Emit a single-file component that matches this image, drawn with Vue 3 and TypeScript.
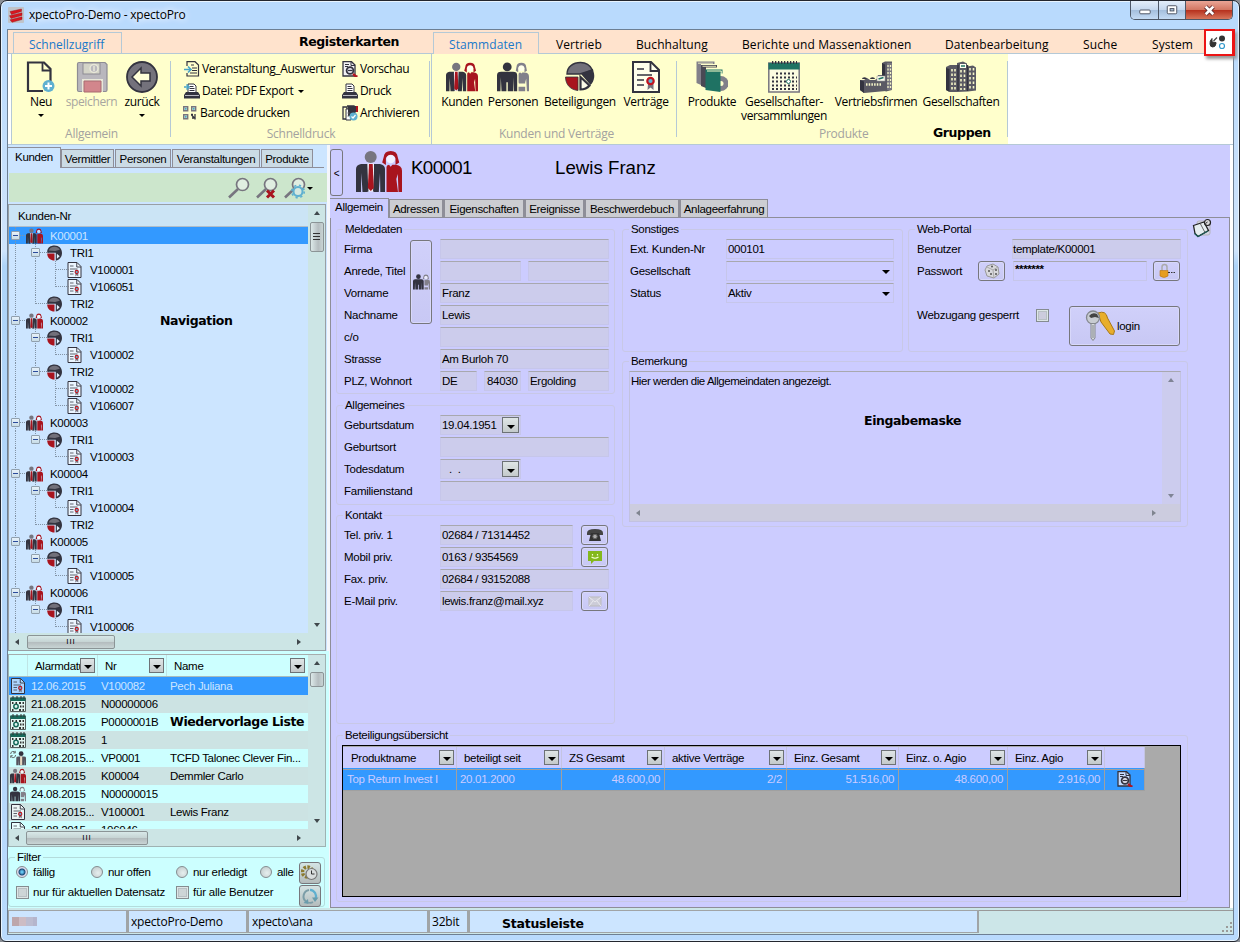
<script setup lang="ts">
interface TreeNode { label: string; kind: 'people' | 'pie' | 'contract'; children?: TreeNode[] }
interface TreeRow { label: string; kind: string; guides: boolean[]; last: boolean; open: boolean }

const contract = (label: string): TreeNode => ({ label, kind: 'contract' })
const fund = (label: string, ...ids: string[]): TreeNode => ({ label, kind: 'pie', children: ids.map(contract) })
const customer = (label: string, ...children: TreeNode[]): TreeNode => ({ label, kind: 'people', children })

const customers: TreeNode[] = [
  customer('K00001', fund('TRI1', 'V100001', 'V106051'), fund('TRI2')),
  customer('K00002', fund('TRI1', 'V100002'), fund('TRI2', 'V100002', 'V106007')),
  customer('K00003', fund('TRI1', 'V100003')),
  customer('K00004', fund('TRI1', 'V100004'), fund('TRI2')),
  customer('K00005', fund('TRI1', 'V100005')),
  customer('K00006', fund('TRI1', 'V100006')),
]

function flatten(nodes: TreeNode[], guides: boolean[], root: boolean): TreeRow[] {
  return nodes.flatMap((n, i) => {
    const last = !root && i === nodes.length - 1
    const kids = n.children ?? []
    return [
      { label: n.label, kind: n.kind, guides, last, open: kids.length > 0 },
      ...flatten(kids, [...guides, !last], false),
    ]
  })
}
const treeRows = flatten(customers, [], true)

const menuTabs = ['Vertrieb', 'Buchhaltung', 'Berichte und Massenaktionen', 'Datenbearbeitung', 'Suche', 'System']
const leftTabs = ['Vermittler', 'Personen', 'Veranstaltungen', 'Produkte']
const detailTabs = ['Adressen', 'Eigenschaften', 'Ereignisse', 'Beschwerdebuch', 'Anlageerfahrung']

const reminders = [
  { icon: 'contract', date: '12.06.2015', nr: 'V100082', name: 'Pech Juliana' },
  { icon: 'event', date: '21.08.2015', nr: 'N00000006', name: '' },
  { icon: 'event', date: '21.08.2015', nr: 'P0000001B', name: '' },
  { icon: 'event', date: '21.08.2015', nr: '1', name: '' },
  { icon: 'agent', date: '21.08.2015...', nr: 'VP0001', name: 'TCFD Talonec Clever Fin...' },
  { icon: 'people', date: '24.08.2015', nr: 'K00004', name: 'Demmler Carlo' },
  { icon: 'persons', date: '24.08.2015', nr: 'N00000015', name: '' },
  { icon: 'contract', date: '24.08.2015...', nr: 'V100001', name: 'Lewis Franz' },
  { icon: 'contract', date: '25.08.2015', nr: '106046', name: '' },
]

const holdings = [
  { head: 'Produktname', value: 'Top Return Invest I', num: false },
  { head: 'beteiligt seit', value: '20.01.2000', num: false },
  { head: 'ZS Gesamt', value: '48.600,00', num: true },
  { head: 'aktive Verträge', value: '2/2', num: true },
  { head: 'Einz. Gesamt', value: '51.516,00', num: true },
  { head: 'Einz. o. Agio', value: '48.600,00', num: true },
  { head: 'Einz. Agio', value: '2.916,00', num: true },
]
</script>

<template>
  <div class="window">
    <svg class="defs" aria-hidden="true">
      <symbol id="people" viewBox="0 0 46 41">
        <circle cx="14.7" cy="6" r="6" fill="#77757f" />
        <path d="M0 41V18q0-4 5-5h19q5 1 5 5v23h-4.700l-.3-19-1.200 19h-5.300V13h-5.600v28H6.500L5.300 22 5 41z" fill="#33333f" />
        <path d="M11.400 12.500h6.600v28h-6.600z" fill="#f2f2f8" />
        <path d="M11 14l1.500 26.500H9zM18.500 14l-1.500 26.500h3.500z" fill="#33333f" />
        <path d="M13 13h3.700l1.100 24-3 3-3-3z" fill="#a8141e" />
        <path d="M34.700 0q6.500 0 7 6l1.500 5.500-3.700 2.500V7.500q-1-3.500-4.800-3.500t-4.800 3.500V14l-3.700-2.500L27.700 6q.5-6 7-6z" fill="#a8141e" />
        <circle cx="34.700" cy="8" r="4.300" fill="#fff" opacity=".75" />
        <path d="M30.500 41V16q0-2 2.500-2.200l1.700 2 1.700-2H39q7 .5 7 6V41h-3.500l-.7-18-1.500 5 1.700 13z" fill="#a8141e" />
      </symbol>
      <symbol id="persons" viewBox="0 0 46 41">
        <circle cx="14.700" cy="6" r="6.300" fill="#33333f" />
        <path d="M0 41V18q0-5 6-5h17q6 0 6 5v23h-5V21l-1 20h-7.500V28h-2v13H6.500L5.500 21 5 41z" fill="#33333f" />
        <path d="M35 0q6.500 0 7 6l1 5.500-3.500 2V7.500Q38.500 4 35 4t-4.500 3.500v6l-3.500-2L28 6q.5-6 7-6z" fill="#82808a" />
        <circle cx="35" cy="8" r="4.300" fill="#fff" opacity=".6" />
        <path d="M31 28V16q1-2 2.500-2l1.500 1.500 1.500-1.500H39q7 0 7 6v21h-3l-1-18-1.500 5v2h-9zM31 34.500h9.500V41H31z" fill="#82808a" />
      </symbol>
      <symbol id="agent" viewBox="0 0 46 41">
        <path d="M2 9a7 7 0 0 1 13-4M16 12a7 7 0 0 1-13 4M15 0v6h-6M2 20v-6h6" fill="none" stroke="#555" stroke-width="2.500" />
        <circle cx="32" cy="8" r="7" fill="#33333f" />
        <path d="M18 41V20q0-4 6-4h16q6 0 6 4v21h-5V24l-1 17H24l-1-17v17z" fill="#55545e" />
        <path d="M29 16h6v25h-6z" fill="#e8d8c0" />
      </symbol>
      <symbol id="pie" viewBox="0 0 32 32">
        <path d="M3 13C3 6 9 1.500 16.500 1.500c6 0 10 3.500 12 7.500L16 13z" fill="#72707a" stroke="#33333f" stroke-width="1.400" />
        <path d="M28.500 8c3 6 2 12-2 16L17 13z" fill="#33333f" />
        <path d="M1.500 16H14v13.500C7 29 1.500 24 1.500 16z" fill="#a8141e" stroke="#33333f" stroke-width=".8" />
        <path d="M16.500 16l9 8.500c-2.500 3-5.500 4-9 4z" fill="#fbfbe8" stroke="#33333f" stroke-width="2.200" />
      </symbol>
      <symbol id="piesmall" viewBox="0 0 16 16">
        <path d="M.7 6.500C1 2.500 4 .5 8 .5c4.500 0 7.500 3 7.500 7.500S12 15.500 9.300 15.500V7.700H.7z" fill="#33333f" />
        <path d="M2.200 5.500C3 3 5 1.700 8 1.700c2.500 0 4.300 1 5.300 3L8.500 6z" fill="#72707a" />
        <path d="M.7 8.500H8v7C4 15.500.7 13 .7 8.500z" fill="#a8141e" />
        <path d="M10.400 8.700l2.800 2.600-2.800 2.400z" fill="#e6f1ff" />
      </symbol>
      <symbol id="contract" viewBox="0 0 28 32">
        <path d="M1 1h18l8 8v22H1z" fill="#fff" fill-opacity=".6" stroke="#33333f" stroke-width="2" />
        <path d="M18.500 1v9H27" fill="none" stroke="#33333f" stroke-width="1.800" />
        <path d="M5 8h7M5 14h15M5 19h7M5 24h7" stroke="#33333f" stroke-width="1.500" />
        <path d="M16 23l-.5 6 3-2.500 3 2.500V23z" fill="#77757f" />
        <circle cx="18.500" cy="20" r="3.200" fill="#5fb4d4" stroke="#c0141e" stroke-width="2.200" />
      </symbol>
      <symbol id="event" viewBox="0 0 16 16">
        <path d="M.5 2v13.500h15V2z" fill="#e2f6f2" stroke="#55605f" />
        <path d="M.5 1.500h15v3.500H.5z" fill="#17695a" />
        <path d="M3 0v3M7 0v3M11 0v3M14 0v3" stroke="#333" />
        <circle cx="6" cy="10.500" r="2.200" fill="none" stroke="#17695a" stroke-width="1.500" />
        <path d="M2 7h1.500M5.500 7h1.500M2 14h1.500M9 7h2M12.500 7h1.500M10 10.500h1.500M12.500 10.500h1.500M9 14h2M12.500 14h1.500" stroke="#333" stroke-width="1.800" />
      </symbol>
      <symbol id="preview" viewBox="0 0 16 16">
        <path d="M1 .7h8.500L13 4v11H1z" fill="#eef" fill-opacity=".8" stroke="#33333f" stroke-width="1.300" />
        <path d="M9 1v3.500h4M3 3.500h4M3 5.500h3" fill="none" stroke="#33333f" />
        <circle cx="8" cy="9.500" r="3.400" fill="#e4e4f0" stroke="#33333f" stroke-width="1.800" />
        <path d="M6 9.500h4.500" stroke="#33333f" stroke-width="1.200" />
        <path d="M11 13l3 2.500h1.500" stroke="#b0141e" stroke-width="2.300" />
      </symbol>
      <symbol id="printer" viewBox="0 0 16 16">
        <path d="M4 9V1h6l2 2v6" fill="#fff" stroke="#33333f" />
        <path d="M5.500 3.500h4M5.500 5.500h5M5.500 7.500h5" stroke="#33333f" />
        <path d="M2 9h12l2 3v3.500H0V12z" fill="#33333f" />
        <path d="M1 12.500h14" stroke="#b8b8c0" />
      </symbol>
      <symbol id="lens" viewBox="0 0 24 24">
        <circle cx="15.500" cy="8.500" r="6" fill="#e8f1ea" fill-opacity=".7" stroke="#77757f" stroke-width="1.700" />
        <path d="M11 13L2 21.500" stroke="#77757f" stroke-width="2.600" />
      </symbol>
    </svg>

    <header class="titlebar">
      <svg class="app-icon" viewBox="0 0 16 16"><rect width="16" height="16" rx="1" fill="#bfc3c9" /><path d="M2 4.500L13.500 2v2.500L3.500 7.500zM1.500 8.700L14 5.800v2.700L3 11.500zM2 12.800l12-3v2.700L4 15.300z" fill="#d8161f" stroke="#8c1216" stroke-width=".4" /></svg>
      <span class="title">xpectoPro-Demo - xpectoPro</span>
      <div class="controls">
        <i class="ctl min"><svg viewBox="0 0 28 19"><rect x="9" y="9.500" width="11" height="4" rx="1" fill="#fff" stroke="#4b5260" /></svg></i>
        <i class="ctl max"><svg viewBox="0 0 27 19"><rect x="8.500" y="5" width="10" height="8.500" rx="1" fill="#fff" stroke="#4b5260" /><rect x="11.500" y="8" width="4" height="2.500" fill="#a9bfd8" stroke="#4b5260" /></svg></i>
        <i class="ctl close"><svg viewBox="0 0 47 19"><path d="M20 6l8 8M28 6l-8 8" stroke="#5b2a2e" stroke-width="4.600" /><path d="M20 6l8 8M28 6l-8 8" stroke="#fff" stroke-width="2.800" /></svg></i>
      </div>
    </header>

    <div class="client">
      <nav class="menu ui">
        <span class="mtab quick">Schnellzugriff</span>
        <span class="note n-reg">Registerkarten</span>
        <span class="mtab active">Stammdaten</span>
        <span v-for="(t, i) in menuTabs" :key="t" class="mitem" :class="'m' + i">{{ t }}</span>
        <span class="toggle"><svg viewBox="0 0 26 22"><path d="M11 6.500L7.500 10" stroke="#444" stroke-width="1.300" /><path d="M6 7.500v3.500l4 .5v1q-.5 3.500-3.200 3.500T4 13q-.5-3 2-5.500z" fill="#333" stroke="#333" /><circle cx="16" cy="7.500" r="3" fill="#333" /><circle cx="16" cy="15" r="2.500" fill="#fff" stroke="#3098cc" stroke-width="1.200" /></svg></span>
      </nav>

      <div class="ribbon ui">
        <section class="group g-allg">
          <div class="bigs">
            <div class="big"><svg class="ic32" viewBox="0 0 32 32"><path d="M6 1.500h13l6.500 6.500V20M18 30H3V1.500h4" fill="none" stroke="#33333f" stroke-width="2.200" /><path d="M17.500 1.500V9.500H25.500" fill="none" stroke="#33333f" stroke-width="1.800" /><circle cx="23.500" cy="25" r="6" fill="#5fb0d0" /><path d="M23.500 21.500v7M20 25h7" stroke="#fff" stroke-width="2" /></svg><span>Neu</span><i class="caret" /></div>
            <div class="big off"><svg class="ic32" viewBox="0 0 32 32"><path d="M1.500 3q0-1.500 1.500-1.500h26l2 2V29q0 1.500-1.500 1.500H3Q1.500 30.500 1.500 29z" fill="#b9b7bd" stroke="#8e8c94" stroke-width="1.200" /><rect x="7" y="2" width="17" height="11" fill="#d4d4c8" stroke="#8e8c94" /><circle cx="18" cy="7.500" r="4" fill="#b9b7bd" stroke="#e8e8d8" stroke-width="1.500" /><path d="M18 5v5" stroke="#e8e8d8" stroke-width="1.500" /><path d="M6 18h21v13H6z" fill="#e8e8d8" /><path d="M8 20h17v11H8z" fill="#d2868c" stroke="#a86a70" /></svg><span>speichern</span></div>
            <div class="big"><svg class="ic32" viewBox="0 0 32 32"><circle cx="16" cy="16" r="15" fill="#74727c" stroke="#33333f" stroke-width="1.800" /><path d="M6 16l9-9v5h9v8h-9v5z" fill="#ffffd8" stroke="#33333f" stroke-width="1.500" /></svg><span>zurück</span><i class="caret" /></div>
          </div>
          <div class="gname">Allgemein</div>
        </section>
        <section class="group g-druck">
          <div class="smalls">
            <span class="small"><svg class="ic16" viewBox="0 0 16 16"><path d="M3 5V.7h8L14.500 4v11H3v-3" fill="none" stroke="#33333f" stroke-width="1.200" /><path d="M7 4h3M8 7h5M8 9.500h5M6 12h7" stroke="#33333f" /><path d="M0 8.500h6M4 5.500l3 3-3 3" fill="none" stroke="#4aa4c8" stroke-width="1.700" /></svg>Veranstaltung_Auswertur</span>
            <span class="small"><svg class="ic16"><use href="#preview" /></svg>Vorschau</span>
            <span class="small"><svg class="ic16" viewBox="0 0 16 16"><use href="#printer" /><path d="M0 4h4M2.500 1.500L5 4 2.500 6.500" fill="none" stroke="#4aa4c8" stroke-width="1.600" /></svg>Datei: PDF Export<i class="caret inline" /></span>
            <span class="small"><svg class="ic16"><use href="#printer" /></svg>Druck</span>
            <span class="small bar"><svg class="ic16" viewBox="0 0 16 16"><g fill="none" stroke="#77757f" stroke-width="1.400"><path d="M1.700 1.700h4v4h-4zM9.700 1.700h4v4h-4zM1.700 9.700h4v4h-4z" /></g><path d="M2.700 3.700h2M10.700 3.700h2M2.700 11.700h2" stroke="#4aa4c8" stroke-width="2" /><path d="M9.500 10l4 4M13 9v5.500M10 13h2M9 9.500h2" stroke="#33333f" stroke-width="1.300" /></svg>Barcode drucken</span>
            <span class="small"><svg class="ic16" viewBox="0 0 16 16"><path d="M1 2h4v12H1zM5 1h7v9" fill="none" stroke="#33333f" stroke-width="1.300" /><path d="M4 4h5v11H4z" fill="#fff" stroke="#33333f" /><path d="M6 1h8l1 5-5 5H6z" fill="#33333f" /><path d="M15 1v6" stroke="#b0141e" stroke-width="2" /><path d="M5.500 8h2M5.500 11h2" stroke="#666" /><circle cx="11.500" cy="11.500" r="4" fill="#5fb0d0" /><path d="M9.500 11.500l1.500 1.500 2.500-3" fill="none" stroke="#fff" stroke-width="1.200" /></svg>Archivieren</span>
          </div>
          <div class="gname">Schnelldruck</div>
        </section>
        <section class="group g-kunden">
          <div class="bigs">
            <div class="big"><svg class="ic32"><use href="#people" /></svg><span>Kunden</span></div>
            <div class="big"><svg class="ic32"><use href="#persons" /></svg><span>Personen</span></div>
            <div class="big"><svg class="ic32"><use href="#pie" /></svg><span>Beteiligungen</span></div>
            <div class="big"><svg class="ic32"><use href="#contract" /></svg><span>Verträge</span></div>
          </div>
          <div class="gname">Kunden und Verträge</div>
        </section>
        <section class="group g-prod">
          <div class="bigs">
            <div class="big"><svg class="ic32" viewBox="0 0 32 32"><path d="M.5.500h18v2.500H5v21l-4.500-2z" fill="#82808a" /><path d="M2 2.200h15" stroke="#ffc" stroke-width=".8" /><path d="M5 4h16v2.500H10V27l-5-2z" fill="#4a4954" /><path d="M6.500 5.300H20" stroke="#ffc" stroke-width=".8" /><circle cx="25" cy="22.500" r="7.500" fill="#82808a" /><circle cx="25" cy="22.500" r="2.500" fill="#ffc" /><path d="M9.500 8.500h17v4h-2V31l-15-2z" fill="#1f7263" /><path d="M11 10h14.500M25.200 10v3" stroke="#ffc" stroke-width="1" /></svg><span>Produkte</span></div>
            <div class="big"><svg class="ic32" viewBox="0 0 32 32"><rect x=".8" y="2" width="30.400" height="29" fill="#fbfbe0" stroke="#77757f" stroke-width="1.500" /><path d="M.5 2h31v6.500H.5z" fill="#1f7263" /><path d="M4 1.500h25" stroke="#33333f" stroke-width="3" stroke-dasharray="1.300 1.700" /><g stroke="#33333f" stroke-width="1.800" stroke-dasharray="2 2"><path d="M8 12.500h20M4 16.500h25M4 20.500h25M4 24.500h25M4 28h25" /></g><circle cx="20.500" cy="20.500" r="2" fill="#fff" stroke="#1f7263" /></svg><span>Gesellschafter-<br>versammlungen</span></div>
            <div class="big"><svg class="ic32" viewBox="0 0 32 32"><path d="M22 2l3-1.500h7V29l-6 1.500-4-2z" fill="#5b5a64" /><path d="M27 2h5v27h-5z" fill="#77757f" /><path d="M0 19h4l3-2 3 2h5l3-2v-3h8v16l-22 2-4-3z" fill="#5b5a64" /><path d="M0 19l4 1.500V32l-4-3zM22 2l3 1.500V16h-3z" fill="#33333f" /><path d="M2 18a2 1.500 0 0 1 5 0M10 18a2 1.500 0 0 1 5 0" fill="#33333f" /><path d="M28 4v23M30.500 4v23" stroke="#f5f5c8" stroke-width="1.300" stroke-dasharray="2 1.500" /><path d="M6 23.500h16" stroke="#f5f5c8" stroke-width="2.500" stroke-dasharray="1.500 1.200" /><path d="M17 15h8v5h-8z" fill="#fffff0" stroke="#999" stroke-width=".6" /><path d="M18.500 18l5-1.500" stroke="#1f7263" stroke-width="1.700" /></svg><span>Vertriebsfirmen</span></div>
            <div class="big"><svg class="ic32" viewBox="0 0 32 32"><path d="M1 6l4-2h7V2l6-1.500 4 2v3l6-1 3 2v23l-8 1-11 .5H5l-4-2z" fill="#5b5a64" /><path d="M1 7l3.500 1v23L1 29z" fill="#33333f" /><g stroke="#f5f5c8" stroke-width="1.600" stroke-dasharray="2.500 2"><path d="M7 8v21M10 8v21M16 9v20M19.500 9v20M25 7v22M28.500 7v22" /></g><path d="M13 4v26M22.500 4v26" stroke="#33333f" stroke-width="1.500" /><path d="M15 3h6v4h-6z" fill="#fffff0" /><path d="M16 5h4" stroke="#1f7263" stroke-width="1.500" /></svg><span>Gesellschaften</span></div>
          </div>
          <div class="gname">Produkte<span class="note n-grp">Gruppen</span></div>
        </section>
      </div>

      <div class="main">
        <aside class="left">
          <div class="tabs ltabs">
            <span class="tab on">Kunden</span>
            <span v-for="t in leftTabs" :key="t" class="tab">{{ t }}</span>
          </div>
          <div class="toolbar">
            <svg><use href="#lens" /></svg>
            <svg viewBox="0 0 24 24"><use href="#lens" /><path d="M12 14.500l7 7M19 14.500l-7 7" stroke="#a8141e" stroke-width="3" /></svg>
            <svg viewBox="0 0 24 24"><use href="#lens" /><circle cx="15" cy="15.500" r="4.500" fill="#d5e8e0" stroke="#5fb0d0" stroke-width="2" /><circle cx="15" cy="15.500" r="6.200" fill="none" stroke="#5fb0d0" stroke-width="1.700" stroke-dasharray="2.200 2.700" /></svg>
            <i class="caret" />
          </div>
          <div class="tree">
            <div class="tree-view">
              <div class="tree-head">Kunden-Nr</div>
              <div class="tree-rows">
                <div v-for="(r, i) in treeRows" :key="i" class="trow" :class="{ sel: i === 0 }">
                  <i v-for="(g, k) in r.guides" :key="k" class="cell" :class="{ line: g }" />
                  <i class="cell own" :class="[r.last ? 'end' : 'line']"><b v-if="r.open" class="exp" /></i>
                  <svg class="tic" :class="r.kind"><use :href="r.kind === 'pie' ? '#piesmall' : '#' + r.kind" /></svg>
                  <span>{{ r.label }}</span>
                </div>
              </div>
              <div class="hbar"><i class="arr l" /><i class="thumb t1">III</i><i class="arr r" /></div>
            </div>
            <div class="vbar"><i class="arr u" /><i class="vthumb grip" /><i class="arr d" /></div>
            <span class="note n-nav">Navigation</span>
          </div>
          <div class="lower">
            <div class="list">
              <div class="list-view">
                <div class="lrow lhead"><i /><span>Alarmdatum<b class="dd" /></span><span>Nr<b class="dd" /></span><span>Name<b class="dd" /></span></div>
                <div class="lrows">
                  <div v-for="(r, i) in reminders" :key="i" class="lrow" :class="{ sel: i === 0, alt: i % 2 === 1 }">
                    <svg class="lic"><use :href="'#' + r.icon" /></svg><span>{{ r.date }}</span><span>{{ r.nr }}</span><span>{{ r.name }}</span>
                  </div>
                </div>
                <div class="hbar"><i class="arr l" /><i class="thumb t2">III</i><i class="arr r" /></div>
              </div>
              <div class="vbar"><i class="arr u" /><i class="vthumb tiny" /><i class="arr d" /></div>
              <span class="note n-wv">Wiedervorlage Liste</span>
            </div>
            <fieldset class="box filter">
              <legend>Filter</legend>
              <div class="opts">
                <label><i class="radio on" />fällig</label><label><i class="radio" />nur offen</label><label><i class="radio" />nur erledigt</label><label><i class="radio" />alle</label>
              </div>
              <div class="opts chk">
                <label><i class="check" />nur für aktuellen Datensatz</label><label><i class="check" />für alle Benutzer</label>
              </div>
              <div class="fbtns">
                <span class="btn"><svg viewBox="0 0 18 18"><circle cx="6.500" cy="8" r="5" fill="none" stroke="#8c7a30" stroke-width="3.500" stroke-dasharray="2.500 1.300" /><circle cx="10.500" cy="10" r="5.500" fill="#d8dcdc" stroke="#777" stroke-width="1.200" /><path d="M10.500 6.500V10h3" fill="none" stroke="#333" /></svg></span>
                <span class="btn"><svg viewBox="0 0 18 18"><path d="M5 14.500A6.500 6.500 0 0 1 8 3" fill="none" stroke="#7c9ea8" stroke-width="2" /><path d="M9 2.800a6.500 6.500 0 0 1 5.500 9" fill="none" stroke="#5fb0d0" stroke-width="2.200" /><path d="M11 10.500h6.500l-3.500 4.500zM7 12l.5 5-5-1z" fill="#6a9cac" /><path d="M7 15.500q3 1 5-.5" fill="none" stroke="#7c9ea8" stroke-width="1.600" /></svg></span>
              </div>
            </fieldset>
          </div>
        </aside>

        <main class="right">
          <div class="rhead">
            <span class="collapse">&lt;</span>
            <svg class="ppl"><use href="#people" /></svg>
            <span class="h1 id">K00001</span><span class="h1">Lewis Franz</span>
          </div>
          <div class="tabs rtabs">
            <span class="tab on">Allgemein</span>
            <span v-for="t in detailTabs" :key="t" class="tab">{{ t }}</span>
            <i class="rest" />
          </div>
          <div class="page">
            <div class="forms">
              <div class="col1">
                <fieldset class="box meld">
                  <legend>Meldedaten</legend>
                  <div class="row"><label>Firma</label><i class="in w168" /></div>
                  <div class="row"><label>Anrede, Titel</label><i class="in w80" /><i class="in w80" /></div>
                  <div class="row"><label>Vorname</label><i class="in w168">Franz</i></div>
                  <div class="row"><label>Nachname</label><i class="in w168">Lewis</i></div>
                  <div class="row"><label>c/o</label><i class="in w168" /></div>
                  <div class="row"><label>Strasse</label><i class="in w168">Am Burloh 70</i></div>
                  <div class="row"><label>PLZ, Wohnort</label><i class="in w36">DE</i><i class="in w36">84030</i><i class="in w80">Ergolding</i></div>
                  <span class="btn pbtn"><svg><use href="#persons" /></svg></span>
                </fieldset>
                <fieldset class="box allg">
                  <legend>Allgemeines</legend>
                  <div class="row"><label>Geburtsdatum</label><i class="in w80">19.04.1951<b class="dd" /></i></div>
                  <div class="row"><label>Geburtsort</label><i class="in w168" /></div>
                  <div class="row"><label>Todesdatum</label><i class="in w80 dots">.&nbsp;&nbsp;.<b class="dd" /></i></div>
                  <div class="row"><label>Familienstand</label><i class="in w168" /></div>
                </fieldset>
                <fieldset class="box kont">
                  <legend>Kontakt</legend>
                  <div class="row"><label>Tel. priv. 1</label><i class="in w133">02684 / 71314452</i><span class="btn"><svg viewBox="0 0 18 14"><path d="M1 5q0-4 8-4t8 4v2h-4V5H5v2H1z" fill="#444" /><path d="M5 5h8l2 8H3z" fill="#333" /><circle cx="9" cy="8.500" r="2.200" fill="#aaa" stroke="#666" /></svg></span></div>
                  <div class="row"><label>Mobil priv.</label><i class="in w133">0163 / 9354569</i><span class="btn"><svg viewBox="0 0 18 14"><path d="M2 1h14v10H8l-3 3v-3H2z" fill="#84b81c" /><path d="M6.500 4v1.500M11.500 4v1.500M5.500 7q3.500 2.500 7 0" fill="none" stroke="#f4ffd8" stroke-width="1.200" /></svg></span></div>
                  <div class="row"><label>Fax. priv.</label><i class="in w168">02684 / 93152088</i></div>
                  <div class="row"><label>E-Mail priv.</label><i class="in w133">lewis.franz@mail.xyz</i><span class="btn"><svg viewBox="0 0 18 14"><path d="M3 3h12v9H3z" fill="#ccccd8" stroke="#bbb" /><path d="M3 3l6 5 6-5M3 12l4-5M15 12l-4-5" fill="none" stroke="#e8e8ee" /></svg></span></div>
                </fieldset>
              </div>
              <div class="col2">
                <div class="two">
                  <fieldset class="box sonst">
                    <legend>Sonstiges</legend>
                    <div class="row"><label>Ext. Kunden-Nr</label><i class="in clear">000101</i></div>
                    <div class="row"><label>Gesellschaft</label><i class="in clear"><b class="drop" /></i></div>
                    <div class="row"><label>Status</label><i class="in clear">Aktiv<b class="drop" /></i></div>
                  </fieldset>
                  <fieldset class="box web">
                    <legend>Web-Portal</legend>
                    <div class="row"><label>Benutzer</label><i class="in user">template/K00001</i></div>
                    <div class="row pw"><label>Passwort</label><span class="btn"><svg viewBox="0 0 18 16"><path d="M4 3l6-2 5 3 1 7-5 4-7-2-2-6z" fill="#d8d8dc" stroke="#999" /><path d="M4 4l6 3 5-3M10 7l1 8" fill="none" stroke="#aaa" /><circle cx="6" cy="8" r="1" fill="#555" /><circle cx="8" cy="11" r="1" fill="#555" /><circle cx="13" cy="7" r="1" fill="#555" /><circle cx="13" cy="11" r="1" fill="#555" /><circle cx="9" cy="3.500" r="1" fill="#555" /></svg></span><i class="in clear pass">*******</i><span class="btn"><svg viewBox="0 0 18 16"><path d="M4 8V4a2.500 2.500 0 0 1 5 0v3" fill="none" stroke="#aaa" stroke-width="1.500" /><path d="M2 7.500h8v5.500q-4 3-8 0z" fill="#e59d20" stroke="#b87410" stroke-width=".6" /><path d="M10 9.500h2M13 9.500h1.500M15.500 9.500H17" stroke="#333" stroke-width="1.200" /></svg></span></div>
                    <div class="row lock"><label>Webzugang gesperrt</label><i class="check" /><span class="btn login"><svg viewBox="0 0 30 32"><path d="M13 3q8-3 9.500 5l7 13-1 3.500-3.500-.5L16 12z" fill="#e8ae2c" stroke="#a87818" /><circle cx="8" cy="7.500" r="6.500" fill="#c8ccd2" stroke="#84888e" stroke-width="1.300" /><path d="M4 6q3-4 8-2l2 4-4-1-4 1z" fill="#444" /><path d="M6 13.500h4V28l-2 2.500-2-2.500z" fill="#d4d8dc" stroke="#84888e" /><path d="M8 15v13" stroke="#84888e" /></svg>login</span></div>
                  </fieldset>
                </div>
                <fieldset class="box bem">
                  <legend>Bemerkung</legend>
                  <div class="memo">
                    <p>Hier werden die Allgemeindaten angezeigt.</p>
                    <div class="vbar plain"><i class="arr u" /><i class="arr d" /></div>
                    <div class="hbar plain"><i class="arr l" /><i class="arr r" /></div>
                  </div>
                  <span class="note n-mask">Eingabemaske</span>
                </fieldset>
              </div>
              <svg class="pin" viewBox="0 0 20 20"><rect x="5" y="3" width="13" height="14" rx="2" fill="#d4d4e0" stroke="#b4b4bc" /><path d="M1.500 7.500L12 4l4.500 8.500L6 18.500l-3-3z" fill="#e6eef0" stroke="#222" stroke-width="1.300" /><path d="M8.500 6l4.500 8.500" stroke="#666" /><path d="M2.500 15.500l3.500 3 10-5.500" fill="none" stroke="#1d5c58" stroke-width="1.200" /><circle cx="15.500" cy="4.500" r="3" fill="#ddd" stroke="#222" stroke-width="1.200" /><path d="M13.500 5.500l2-1.500" stroke="#222" /></svg>
            </div>
            <fieldset class="box bet">
              <legend>Beteiligungsübersicht</legend>
              <div class="grid">
                <div class="grow ghead"><span v-for="h in holdings" :key="h.head">{{ h.head }}<b class="dd" /></span><span /></div>
                <div class="grow gsel"><span v-for="h in holdings" :key="h.head" :class="{ num: h.num }">{{ h.value }}</span><span class="pv"><svg><use href="#preview" /></svg></span></div>
              </div>
            </fieldset>
          </div>
        </main>
      </div>

      <footer class="status">
        <span><i class="mosaic"><b /><b /><b /><b /></i></span><span>xpectoPro-Demo</span><span>xpecto\ana</span><span>32bit</span><span><em class="note n-stat">Statusleiste</em></span>
        <span class="grip-cell"><svg viewBox="0 0 12 12"><path d="M9 1h2v2H9zM5 5h2v2H5zM9 5h2v2H9zM1 9h2v2H1zM5 9h2v2H5zM9 9h2v2H9z" fill="#9a9a98" /></svg></span>
      </footer>
    </div>
  </div>
</template>

<style>
html, body { margin: 0; background: #8b8f96; overflow: hidden; }
</style>

<style scoped>
* { box-sizing: border-box; }
i, em { font-style: normal; }
.defs { position: absolute; width: 0; height: 0; }
.window { width: 1240px; height: 942px; border: 1px solid #23262e; border-radius: 7px 7px 6px 6px; background: linear-gradient(#b9dafd 0, #b9dafd 30px, #cfe4fb 250px, #aed4f8 265px, #b9dafd 100%); padding: 0 6px 6px 6px; display: flex; flex-direction: column; font: 11.500px/14px "Liberation Sans", sans-serif; letter-spacing: -.3px; color: #000; box-shadow: inset 0 0 0 1px #e8f4ff; white-space: nowrap; }
.ui { font-family: "Open Sans", "Noto Sans", sans-serif; font-size: 12px; letter-spacing: -.36px; }
.note { font: bold 12.500px/16px "DejaVu Sans", sans-serif; letter-spacing: -.4px; color: #000; }
.n-nav, .n-wv, .n-mask { position: absolute; }

.titlebar { height: 28px; flex: none; display: flex; align-items: center; padding-left: 1px; font: 12px/16px "Open Sans", sans-serif; letter-spacing: -.2px; }
.app-icon { width: 16px; height: 16px; margin-right: 5px; }
.title { text-shadow: 0 0 6px #fff, 0 0 8px #fff; }
.controls { display: flex; margin-left: auto; align-self: flex-start; margin-right: 0; border: 1px solid #4d5766; border-top: 0; border-radius: 0 0 5px 5px; overflow: hidden; height: 19px; }
.ctl { display: block; height: 18px; background: linear-gradient(#e4eefa, #c5d8ee 48%, #a4bedc 50%, #c4dbf4); border-right: 1px solid #4d5766; }
.ctl svg { display: block; width: 100%; height: 18px; }
.min { width: 28px; } .max { width: 27px; }
.close { width: 46px; border: 0; background: linear-gradient(#eaa596, #d37763 48%, #b52f1c 50%, #d8755a); }

.client { height: 906px; display: flex; flex-direction: column; border: 1px solid #6d7f93; background: #fff; width: 1227px; flex: none; }
.menu { height: 24px; background: #ffe3cd; display: flex; flex: none; border-bottom: 1px solid #b5c9d6; position: relative; line-height: 24px; letter-spacing: .1px; }
.mtab { border: 1px solid #b5c9d6; border-bottom: 0; margin-top: 2px; height: 22px; color: #1979ca; padding-left: 15px; line-height: 23px; }
.quick { margin-left: 5px; width: 109px; letter-spacing: 0; }
.n-reg { margin-left: 177px; width: 134px; line-height: 23px; }
.active { width: 106px; background: #ffe3cd; height: 23px; }
.mitem { line-height: 29px; height: 23px; }
.m0 { margin-left: 17px; width: 80px; } .m1 { width: 106px; } .m2 { width: 203px; } .m3 { width: 138px; } .m4 { width: 69px; } .m5 { width: 52px; }
.toggle { position: absolute; left: 1196px; top: -1px; width: 31px; height: 27px; border: 3px solid #ec1414; border-width: 2px 3px 2px 2px; background: #fff; box-shadow: 2px 3px 3px #999; z-index: 2; }
.toggle svg { display: block; width: 26px; height: 22px; }

.ribbon { height: 91px; flex: none; display: flex; border-bottom: 1px solid #b5c9d6; padding-left: 3px; position: relative; }
.group { background: #ffffcc; padding-top: 7px; display: flex; flex-direction: column; position: relative; height: 90px; }
.group::after { content: ""; position: absolute; right: 0; top: 7px; height: 76px; width: 1px; background: #b5c9d6; }
.g-allg { width: 160px; border-left: 1px solid #b5c9d6; }
.g-druck { width: 261px; border-right: 1px solid #b5c9d6; }
.g-druck::after { right: 1px; }
.g-kunden { width: 245px; } .g-prod { width: 331px; }
.bigs { display: grid; justify-content: start; height: 72px; flex: none; }
.g-allg .bigs { grid-template-columns: 50px 51px 50px; padding-left: 4px; }
.g-kunden .bigs { grid-template-columns: 50px 52px 82px 50px; padding-left: 5px; }
.g-prod .bigs { grid-template-columns: 48px 96px 88px 82px; padding-left: 11px; }
.big { display: flex; flex-direction: column; align-items: center; text-align: center; line-height: 14px; }
.big > span { margin: 2px -12px 0; }
.off { color: #a8a6a0; }
.ic32 { width: 32px; height: 32px; flex: none; }
.caret { display: block; width: 0; height: 0; border: 3px solid transparent; border-top-color: #000; border-bottom: 0; }
.big .caret { margin-top: 5px; }
.caret.inline { margin-left: 4px; }
.gname { text-align: center; color: #a3a2a0; line-height: 11px; height: 11px; margin-top: -5px; position: relative; letter-spacing: -.25px; }
.g-prod .gname { text-align: left; padding-left: 142px; } .g-kunden .gname { text-align: left; padding-left: 67px; }
.n-grp { position: absolute; left: 256px; top: -3px; }
.smalls { display: grid; grid-template-columns: 158px 90px; grid-auto-rows: 22px; height: 72px; padding-left: 13px; }
.small { display: flex; align-items: center; height: 16px; }
.ic16 { width: 16px; height: 16px; margin-right: 2px; flex: none; overflow: visible; }
.bar .ic16 { margin: 0 2px 0 -2px; }

.main { flex: none; height: 763px; display: flex; }
.left { width: 322px; background: #cce5ff; display: flex; flex-direction: column; border-right: 3px solid #f4f6fb; padding-top: 2px; }
.tabs { display: flex; align-items: flex-end; }
.tab { background: #cccdd2; border: 1px solid #8e8e98; border-bottom: 0; text-align: center; line-height: 17px; height: 18px; margin-right: 1px; }
.ltabs { height: 21px; width: 316px; border-bottom: 1px solid #8e8e98; }
.ltabs .tab { background: #cbdbe5; line-height: 19px; }
.ltabs .tab:nth-child(2) { width: 53px; } .ltabs .tab:nth-child(3) { width: 56px; } .ltabs .tab:nth-child(4) { width: 88px; } .ltabs .tab:nth-child(5) { width: 52px; }
.ltabs .tab.on { width: 53px; background: #cce5ff; height: 21px; border-left: 0; margin: 0 0 -1px; line-height: 18px; }
.toolbar { margin: 5px 0 2px 1px; height: 29px; background: #cce6cc; display: flex; align-items: center; padding-left: 218px; gap: 4px; flex: none; }
.toolbar svg { width: 24px; height: 24px; }
.toolbar .caret { margin-left: -4px; margin-top: 1px; }
.tree { position: relative; height: 447px; width: 318px; border: 1px solid #999fa4; display: flex; flex: none; }
.tree-view { width: 299px; display: flex; flex-direction: column; }
.tree-head { height: 22px; padding-left: 9px; line-height: 22px; flex: none; background: #cbe4f5; border-bottom: 1px solid #b0bdc8; }
.tree-rows { height: 406px; overflow: hidden; flex: none; }
.trow { height: 17px; display: flex; align-items: center; line-height: 18px; }
.sel { background: #39f; color: #cce5ff; }
.cell { position: relative; width: 20px; height: 17px; flex: none; }
.cell.line::before, .cell.end::before { content: ""; position: absolute; left: 6px; top: 0; height: 17px; border-left: 1px dotted #8394a6; }
.cell.end::before { height: 9px; }
.cell.own::after { content: ""; position: absolute; left: 7px; top: 8px; width: 13px; border-top: 1px dotted #8394a6; }
.exp { position: absolute; left: 2px; top: 4px; width: 9px; height: 9px; border: 1px solid #91a0ad; border-radius: 1px; background: linear-gradient(#e6f1fa, #c8dce6); z-index: 1; }
.exp::after { content: ""; position: absolute; left: 1px; top: 3px; width: 5px; height: 1px; background: #2a4b9b; }
.tic { width: 17px; height: 16px; margin-left: -3px; margin-right: 7px; flex: none; z-index: 1; }
.tic.contract { width: 15px; margin: 0 8px 0 -2px; }
.hbar { height: 17px; background: #cce5e5; display: flex; align-items: center; width: 299px; position: relative; flex: none; }
.arr { width: 0; height: 0; border: 3px solid transparent; flex: none; }
.arr.l { border-right: 4px solid #40484c; border-left: 0; margin-left: 6px; }
.arr.r { border-left: 4px solid #40484c; border-right: 0; margin-left: auto; margin-right: 7px; }
.arr.u { border-bottom: 4px solid #40484c; border-top: 0; margin-top: 6px; }
.arr.d { border-top: 4px solid #40484c; border-bottom: 0; margin-top: auto; margin-bottom: 23px; }
.thumb { height: 14px; border: 1px solid #8b9496; border-radius: 2px; background: linear-gradient(#d8e8e8, #c6d4d4 48%, #b4bcbe 52%, #c8d4d4); text-align: center; font-size: 8px; line-height: 12px; letter-spacing: 1px; }
.t1 { width: 88px; margin-left: 8px; } .t2 { width: 122px; margin-left: 7px; }
.vbar { width: 17px; background: #cce5e5; display: flex; flex-direction: column; align-items: center; flex: none; }
.vthumb { width: 14px; border: 1px solid #8b9496; border-radius: 2px; background: linear-gradient(90deg, #dce9e9, #b5bdc0 60%, #c8d4d4); }
.grip { height: 30px; margin-top: 7px; display: grid; place-items: center; }
.grip::after { content: ""; width: 7px; height: 8px; background: repeating-linear-gradient(#333 0 1px, transparent 1px 3px); }
.tiny { height: 15px; margin-top: 7px; }
.n-nav { left: 151px; top: 108px; }

.lower { background: #ccffff; flex: 1; padding: 3px 0 0 0; width: 321px; display: flex; flex-direction: column; }
.list { position: relative; width: 318px; height: 193px; border: 1px solid #9fb2b2; border-top-color: #a6acac; display: flex; flex: none; }
.list-view { width: 299px; display: flex; flex-direction: column; overflow: hidden; }
.lrow { display: grid; grid-template-columns: 20px 70px 69px 1fr; height: 18px; line-height: 18px; align-items: center; flex: none; }
.lrow span { overflow: hidden; padding-left: 2px; }
.alt { background: #cce3e3; }
.lic { width: 16px; height: 16px; margin-left: 1px; }
.lhead { height: 22px; line-height: 22px; grid-template-columns: 18px 70px 69px 1fr; border-bottom: 1px solid #a8bcbc; }
.lhead span { position: relative; height: 21px; padding-left: 7px; border-left: 1px solid #bfe5e5; }
.lrows { height: 152px; overflow: hidden; flex: none; }
.dd { display: grid; place-items: center; width: 15px; height: 15px; border: 1px solid #6d7276; background: linear-gradient(#dfe5e6, #c4cacb); position: absolute; right: 3px; top: 3px; }
.lhead span:not(:last-child) .dd { right: 2px; }
.dd::after, .drop { content: ""; border: 4px solid transparent; border-top-color: #000; border-bottom: 0; margin-top: 3px; }
.n-wv { left: 161px; top: 59px; }

.box { margin: 0; padding: 0; border: 1px solid #c8c8e6; border-radius: 3px; min-width: 0; position: relative; }
.box legend { padding: 0 2px; margin-left: 6px; line-height: 14px; height: 14px; }
.filter { margin: 3px 2px 0 0; width: 317px; height: 57px; border-color: #b4dcdc; flex: none; }
.opts { display: grid; grid-template-columns: 75px 85px 84px 50px; padding-left: 7px; height: 20px; align-items: center; margin-top: -2px; }
.opts.chk { grid-template-columns: 160px 1fr; margin-top: 0; }
.opts label { display: flex; align-items: center; gap: 5px; }
.opts.chk label { gap: 4px; letter-spacing: -.2px; }
.radio { width: 12px; height: 12px; border-radius: 50%; border: 1px solid #858c90; background: radial-gradient(circle at 60% 60%, #e6eeee, #bcc6c8); }
.radio.on { background: radial-gradient(circle, #63c4f0 0 1px, #1a4a78 3px, #dde 4px); }
.check { width: 13px; height: 13px; border: 1px solid #858c90; background: #cdd5d7; box-shadow: inset 0 0 0 1px #dde6e6, inset 0 0 0 2px #b8c0c4; }
.btn { display: grid; place-items: center; border: 1px solid #77777c; border-radius: 3px; background: linear-gradient(#d0d0fa, #c8c8f4); box-shadow: inset 0 0 0 1px #d8d8fa; }
.fbtns { position: absolute; left: 290px; top: -2px; display: grid; gap: 1px; }
.fbtns .btn { width: 22px; height: 22px; background: linear-gradient(#d4e4e4, #b4bcbc); box-shadow: none; }
.fbtns svg { width: 18px; height: 18px; }

.right { width: 903px; background: #ccccff; border-right: 3px solid #fff; display: flex; flex-direction: column; }
.rhead { height: 53px; display: flex; align-items: flex-start; padding-top: 4px; flex: none; }
.collapse { width: 13px; height: 47px; border: 1px solid #77777c; border-radius: 3px; text-align: center; line-height: 47px; font-size: 10px; }
.ppl { width: 46px; height: 41px; margin: 2px 9px 0 13px; }
.h1 { font-size: 18.700px; line-height: 22px; letter-spacing: 0; margin-top: 8px; }
.id { width: 144px; letter-spacing: -.6px; }
.rtabs { height: 20px; flex: none; }
.rtabs .tab { height: 19px; border-bottom: 1px solid #8e8e98; line-height: 18px; margin: 0; border-right-width: 2px; }
.rtabs .tab:nth-child(2) { width: 55px; } .rtabs .tab:nth-child(3) { width: 81px; } .rtabs .tab:nth-child(4) { width: 60px; } .rtabs .tab:nth-child(5) { width: 95px; } .rtabs .tab:nth-child(6) { width: 88px; border-right-width: 1px; }
.rtabs .tab.on { width: 59px; height: 20px; background: #ccf; border: 1px solid #8e8e98; border-width: 1px 1px 0 0; line-height: 17px; }
.rest { flex: 1; border-bottom: 1px solid #8e8e98; }
.page { flex: 1; border: 1px solid #8e8e98; border-top: 0; position: relative; padding: 4px 0 0 5px; }
.forms { display: flex; height: 506px; }
.col1 { width: 286px; } .col2 { width: 566px; }
.col1 .box { width: 279px; padding-left: 7px; }
.meld { height: 172px; margin-bottom: 4px; } .allg { height: 107px; margin-bottom: 3px; } .kont { height: 216px; }
.row { height: 22px; display: flex; align-items: center; gap: 8px; }
.meld .row:nth-child(2), .allg .row:nth-child(2), .kont .row:nth-child(2), .sonst .row:nth-child(2), .web .row:nth-child(2) { margin-top: 2px; }
.row label { width: 88px; flex: none; letter-spacing: -.25px; }
.in { display: block; height: 20px; border: 1px solid #c6c6ea; border-top-color: #a8a8ae; background: #ccccec; line-height: 18px; padding-left: 1px; position: relative; flex: none; }
.w168 { width: 169px; } .w80 { width: 81px; margin-right: -1px; } .w36 { width: 37px; } .w133 { width: 133px; }
.in.w36 + .in.w36 { padding-left: 2px; margin-left: -1px; margin-right: -1px; }
.in .dd { right: 1px; top: 1px; width: 17px; height: 16px; }
.dots { padding-left: 8px; }
.pbtn { position: absolute; left: 73px; top: 4px; width: 22px; height: 84px; }
.pbtn svg { width: 17px; height: 16px; }
.kont .btn { width: 27px; height: 20px; } .kont .btn svg { width: 18px; height: 14px; }
.two { display: flex; gap: 5px; height: 132px; }
.sonst { width: 281px; height: 130px; padding-left: 7px; } .web { width: 280px; height: 130px; padding-left: 8px; }
.sonst legend { margin-left: -1px; } .web legend { margin-left: -2px; } .col1 legend { margin-left: -1px; }
.in.clear { background: #ccccff; width: 168px; }
.drop { position: absolute; right: 3px; top: 5px; width: 0; height: 0; }
.user { width: 169px; margin-left: -1px; padding-left: 0; }
.pw label { width: 53px; } .pw .btn { width: 27px; height: 20px; } .pw .btn svg { width: 18px; height: 16px; }
.in.clear.pass { width: 134px; line-height: 14px; font-weight: bold; letter-spacing: -.4px; margin-right: -2px; padding-left: 1px; }
.lock { margin-top: 22px; align-items: flex-start; position: relative; }
.row.lock label { width: 111px; line-height: 22px; }
.lock .check { margin-top: 5px; background: #ccd; }
.login { position: absolute; left: 152px; top: 2px; width: 111px; height: 40px; grid-template-columns: 30px 60px; justify-content: start; justify-items: start; padding-left: 15px; column-gap: 2px; }
.login svg { width: 30px; height: 32px; }
.bem { height: 173px; width: 566px; }
.memo { position: absolute; left: 6px; top: 3px; width: 552px; height: 151px; border: 1px solid #c2c2e0; border-top-color: #a8a8ae; display: grid; grid-template-columns: 1fr 18px; grid-template-rows: 1fr 17px; }
.memo p { margin: 2px 0 0 1px; letter-spacing: -.45px; }
.plain { background: #ccccee; width: auto; grid-column: auto; } .plain .arr { opacity: .55; } .vbar.plain .arr.d { margin-bottom: 6px; }
.hbar.plain { grid-column: 1 / -1; background: #ccccdf; } .hbar.plain .arr.r { margin-right: 24px; }
.n-mask { left: 241px; top: 45px; }
.pin { width: 20px; height: 20px; margin-left: 4px; margin-top: -4px; }
.bet { width: 852px; height: 174px; position: absolute; left: 5px; top: 510px; }
.grid { position: absolute; left: 5px; top: 3px; width: 839px; height: 152px; background: #aaa; border: 1px solid #000; padding-top: 1px; }
.grow { display: grid; grid-template-columns: 114px 105px 103px 122px 112px 109px 97px 40px; width: 802px; height: 22px; line-height: 22px; }
.grow span { border-right: 1px solid #a0a0a0; position: relative; padding-left: 3px; border-bottom: 1px solid #a0a0a0; }
.ghead { background: #ccccff; height: 21px; }
.ghead span { padding-left: 7px; border-right-color: #c4c4e2; line-height: 22px; } .ghead span:first-child { padding-left: 8px; }
.ghead .dd { right: 2px; }
.gsel { background: #39f; color: #ccccff; } .gsel .num { text-align: right; padding-right: 4px; } .gsel span:first-child { padding-left: 4px; }
.pv svg { width: 16px; height: 16px; display: block; margin: 3px 0 0 9px; }

.status { flex: 1; display: grid; grid-template-columns: 120px 120px 181px 40px 510px 1fr; background: #cce6e8; padding: 2px 0 0 0; font: 12px/21px "Open Sans", sans-serif; letter-spacing: -.2px; }
.status > span { height: 23px; border: 1px solid #a0a4a6; border-right-width: 2px; background: #cce5ff; padding-left: 3px; }
.status > span:nth-child(2), .status > span:nth-child(4) { padding-left: 2px; }
.status .grip-cell { background: #cce6e8; border: 0; border-top: 1px solid #999; display: flex; justify-content: flex-end; align-items: flex-end; }
.grip-cell svg { width: 12px; height: 12px; }
.status .n-stat { margin-left: 29px; line-height: 25px; display: block; letter-spacing: -.25px; }
.mosaic { display: flex; padding-top: 6px; }
.mosaic b { width: 7px; height: 9px; background: #bda6ac; } .mosaic b:nth-child(2) { background: #cdbcc4; } .mosaic b:nth-child(3) { background: #bcbcd0; } .mosaic b:nth-child(4) { width: 4px; background: #b5b5cc; }
</style>
